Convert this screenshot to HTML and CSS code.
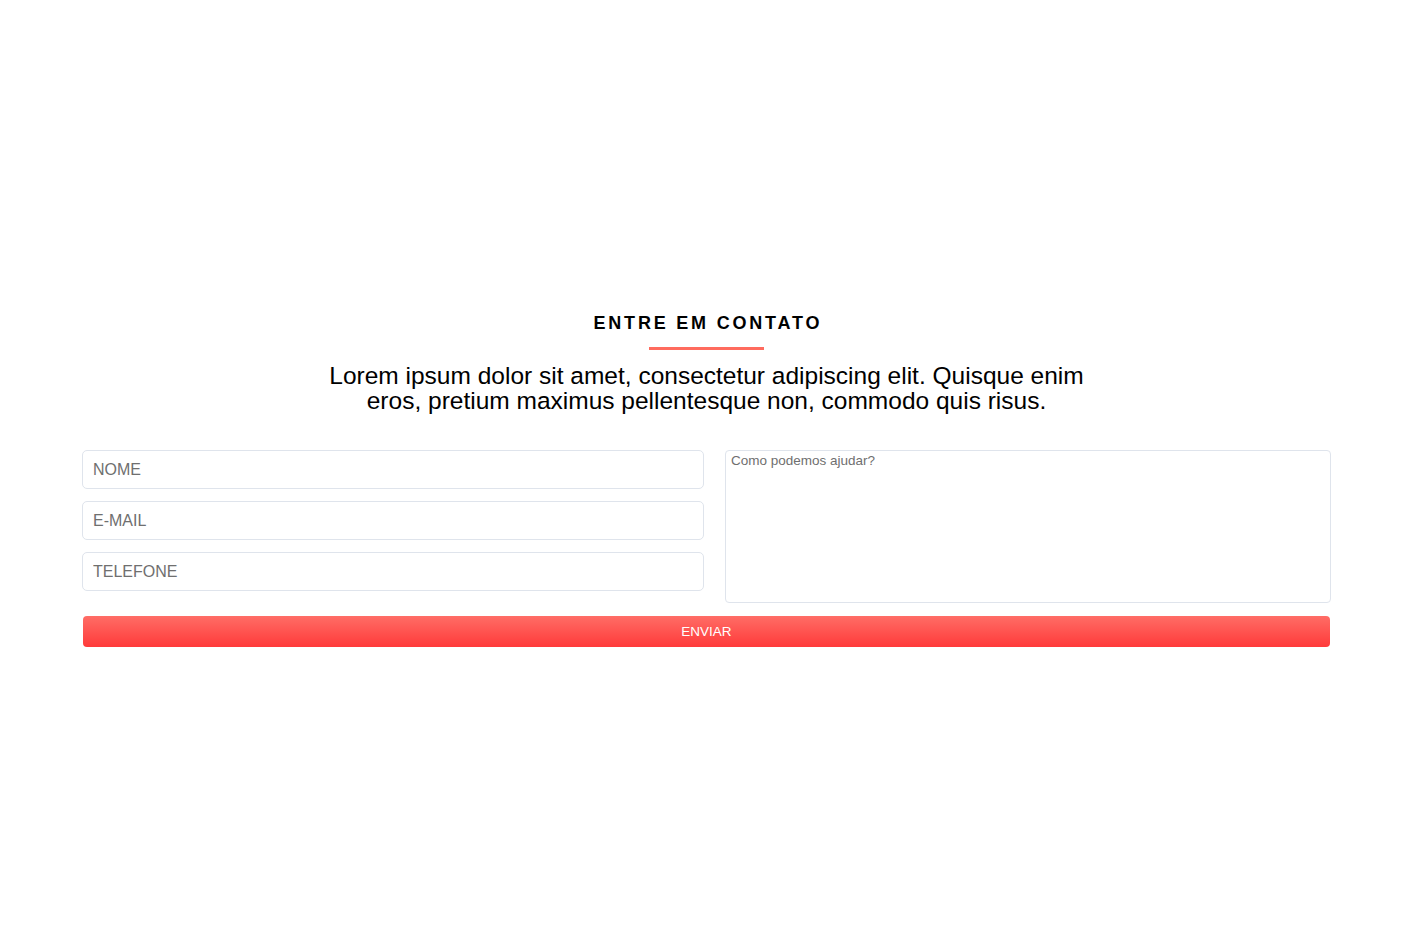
FILE: index.html
```html
<!DOCTYPE html>
<html lang="pt">
<head>
<meta charset="utf-8">
<title>Entre em contato</title>
<link rel="stylesheet" href="styles.css">
</head>
<body>
<section class="contact">
  <h2 class="title">ENTRE EM CONTATO</h2>
  <div class="bar"></div>
  <p class="lead">Lorem ipsum dolor sit amet, consectetur adipiscing elit. Quisque enim eros, pretium maximus pellentesque non, commodo quis risus.</p>
  <form class="form">
    <div class="fields">
      <input class="field" type="text" placeholder="NOME">
      <input class="field" type="email" placeholder="E-MAIL">
      <input class="field" type="tel" placeholder="TELEFONE">
    </div>
    <textarea class="message" placeholder="Como podemos ajudar?"></textarea>
    <button class="send" type="button">ENVIAR</button>
  </form>
</section>
</body>
</html>
```
FILE: styles.css
```css
* { box-sizing: border-box; }
html, body { margin: 0; padding: 0; background: #fff; }
body { font-family: "Liberation Sans", Arial, sans-serif; color: #000; }

.contact {
  width: 1249px;
  margin-left: 82px;
  padding-top: 313px;
  display: flex;
  flex-direction: column;
  align-items: center;
}

.title {
  margin: 0;
  font-size: 18px;
  line-height: 21px;
  font-weight: 700;
  letter-spacing: 2.8px;
  text-indent: 2.8px;
}

.bar {
  width: 115px;
  height: 3px;
  background: #ff6b5e;
  margin-top: 13px;
}

.lead {
  margin: 13px 0 0;
  max-width: 790px;
  text-align: center;
  font-size: 24.5px;
  line-height: 25px;
}

.form {
  width: 100%;
  margin-top: 37px;
  display: grid;
  grid-template-columns: 622px 606px;
  column-gap: 21px;
  row-gap: 13px;
}

.fields {
  display: flex;
  flex-direction: column;
  gap: 12px;
}

.field {
  height: 39px;
  width: 100%;
  border: 1px solid #dfe4ec;
  border-radius: 5px;
  padding: 0 10px;
  font-family: "Liberation Sans", Arial, sans-serif;
  font-size: 16px;
  color: #333;
  background: #fff;
  outline: none;
}

.field::placeholder { color: #6f6f6f; }

.message {
  height: 153px;
  width: 100%;
  border: 1px solid #dfe4ec;
  border-radius: 4px;
  padding: 2px 5px;
  font-family: "Liberation Sans", Arial, sans-serif;
  font-size: 13.5px;
  line-height: 16px;
  resize: none;
  outline: none;
}

.message::placeholder { color: #6f6f6f; }

.send {
  grid-column: 1 / 3;
  height: 31px;
  margin: 0 1px;
  border: 0;
  border-radius: 4px;
  background: linear-gradient(to bottom, #ff6d66, #ff3a3a);
  color: #fff;
  font-family: "Liberation Sans", Arial, sans-serif;
  font-size: 13.5px;
  cursor: pointer;
}
```
